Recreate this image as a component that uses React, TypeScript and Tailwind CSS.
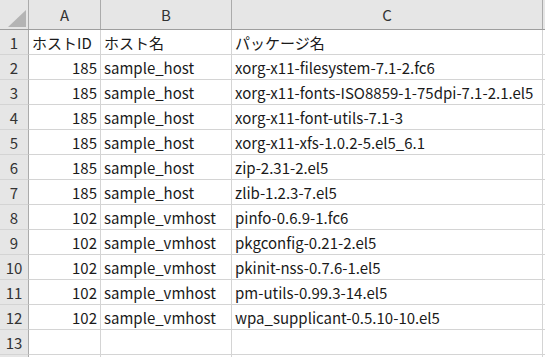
import React from 'react';

const rows: [string, string, string][] = [
  ['185', 'sample_host', 'xorg-x11-filesystem-7.1-2.fc6'],
  ['185', 'sample_host', 'xorg-x11-fonts-ISO8859-1-75dpi-7.1-2.1.el5'],
  ['185', 'sample_host', 'xorg-x11-font-utils-7.1-3'],
  ['185', 'sample_host', 'xorg-x11-xfs-1.0.2-5.el5_6.1'],
  ['185', 'sample_host', 'zip-2.31-2.el5'],
  ['185', 'sample_host', 'zlib-1.2.3-7.el5'],
  ['102', 'sample_vmhost', 'pinfo-0.6.9-1.fc6'],
  ['102', 'sample_vmhost', 'pkgconfig-0.21-2.el5'],
  ['102', 'sample_vmhost', 'pkinit-nss-0.7.6-1.el5'],
  ['102', 'sample_vmhost', 'pm-utils-0.99.3-14.el5'],
  ['102', 'sample_vmhost', 'wpa_supplicant-0.5.10-10.el5'],
];

function Row({ n, a, b, c, right }: { n: number; a: string; b: string; c: string; right?: boolean }) {
  return (
    <div className="flex h-[25px]">
      <div className="w-[29px] shrink-0 bg-[#e6e6e6] border-r border-r-[#ababab] border-b border-b-[#d4d4d4] flex items-center justify-center text-[#333]">
        {n}
      </div>
      <div className={`w-[72px] shrink-0 border-r border-b border-[#d4d4d4] flex items-center px-[3px] ${right ? 'justify-end' : ''}`}>
        {a}
      </div>
      <div className="w-[131px] shrink-0 border-r border-b border-[#d4d4d4] flex items-center px-[3px]">{b}</div>
      <div className="w-[311px] shrink-0 border-r border-b border-[#d4d4d4] flex items-center px-[3px] whitespace-nowrap">
        {c}
      </div>
      <div className="flex-1 border-b border-[#d4d4d4]" />
    </div>
  );
}

export default function App() {
  return (
    <div
      className="w-[545px] h-[357px] overflow-hidden bg-white text-[15px] text-[#1a1a1a] leading-none"
      style={{ fontFamily: '"Noto Sans CJK JP", "Noto Sans", sans-serif' }}
    >
      {/* column headers */}
      <div className="flex h-[30px] bg-[#e6e6e6] border-b border-[#9e9e9e] text-[#333]">
        <div className="w-[29px] shrink-0 border-r border-[#ababab] relative">
          <svg className="absolute left-[8px] top-[10px]" width="18" height="17" viewBox="0 0 18 17">
            <polygon points="18,0 18,17 0,17" fill="#b4b4b4" />
          </svg>
        </div>
        <div className="w-[72px] shrink-0 border-r border-[#ababab] flex items-center justify-center">A</div>
        <div className="w-[131px] shrink-0 border-r border-[#ababab] flex items-center justify-center">B</div>
        <div className="w-[311px] shrink-0 border-r border-[#ababab] flex items-center justify-center">C</div>
        <div className="flex-1" />
      </div>
      <Row n={1} a="ホストID" b="ホスト名" c="パッケージ名" />
      {rows.map((r, i) => (
        <Row key={i} n={i + 2} a={r[0]} b={r[1]} c={r[2]} right />
      ))}
      <Row n={13} a="" b="" c="" />
      <div className="flex h-[10px]">
        <div className="w-[29px] shrink-0 bg-[#e6e6e6] border-r border-[#ababab]" />
        <div className="w-[72px] shrink-0 border-r border-[#d4d4d4]" />
        <div className="w-[131px] shrink-0 border-r border-[#d4d4d4]" />
        <div className="w-[311px] shrink-0 border-r border-[#d4d4d4]" />
      </div>
    </div>
  );
}
